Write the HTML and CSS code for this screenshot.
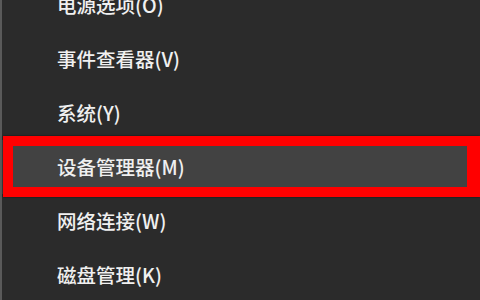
FILE: index.html
```html
<!DOCTYPE html>
<html lang="zh-CN">
<head>
    <meta charset="UTF-8">
    <title>快速链接菜单</title>
    <link rel="stylesheet" href="styles.css">
</head>
<body>
    <div class="menu">
        <div class="menu-item">电源选项(O)</div>
        <div class="menu-item">事件查看器(V)</div>
        <div class="menu-item">系统(Y)</div>
        <div class="menu-item active">设备管理器(M)</div>
        <div class="menu-item">网络连接(W)</div>
        <div class="menu-item">磁盘管理(K)</div>
    </div>
</body>
</html>
```

FILE: styles.css
```css
html, body {
    margin: 0;
    height: 100%;
    overflow: hidden;
    background: #2b2b2b;
}
.menu {
    display: flow-root;
    height: 100%;
    border-left: 2px solid #5a5a5a;
    font-family: "Noto Sans CJK SC", "Noto Sans", sans-serif;
    font-size: 19.5px;
    font-weight: 500;
    color: #f0f0f0;
}
.menu-item {
    height: 54px;
    line-height: 54px;
    padding-left: 55px;
    position: relative;
    white-space: nowrap;
}
.menu-item:first-child {
    margin-top: -22.5px;
}
.menu-item.active {
    background: #424242;
}
/* 红色标注框 */
.menu-item.active::after {
    content: "";
    position: absolute;
    left: 1px;
    right: 0;
    top: -3.5px;
    bottom: -3.5px;
    border: 10px solid #ff0000;
    border-right-width: 13px;
    box-shadow: 0 0 2px rgba(0,0,0,0.6);
}
```
